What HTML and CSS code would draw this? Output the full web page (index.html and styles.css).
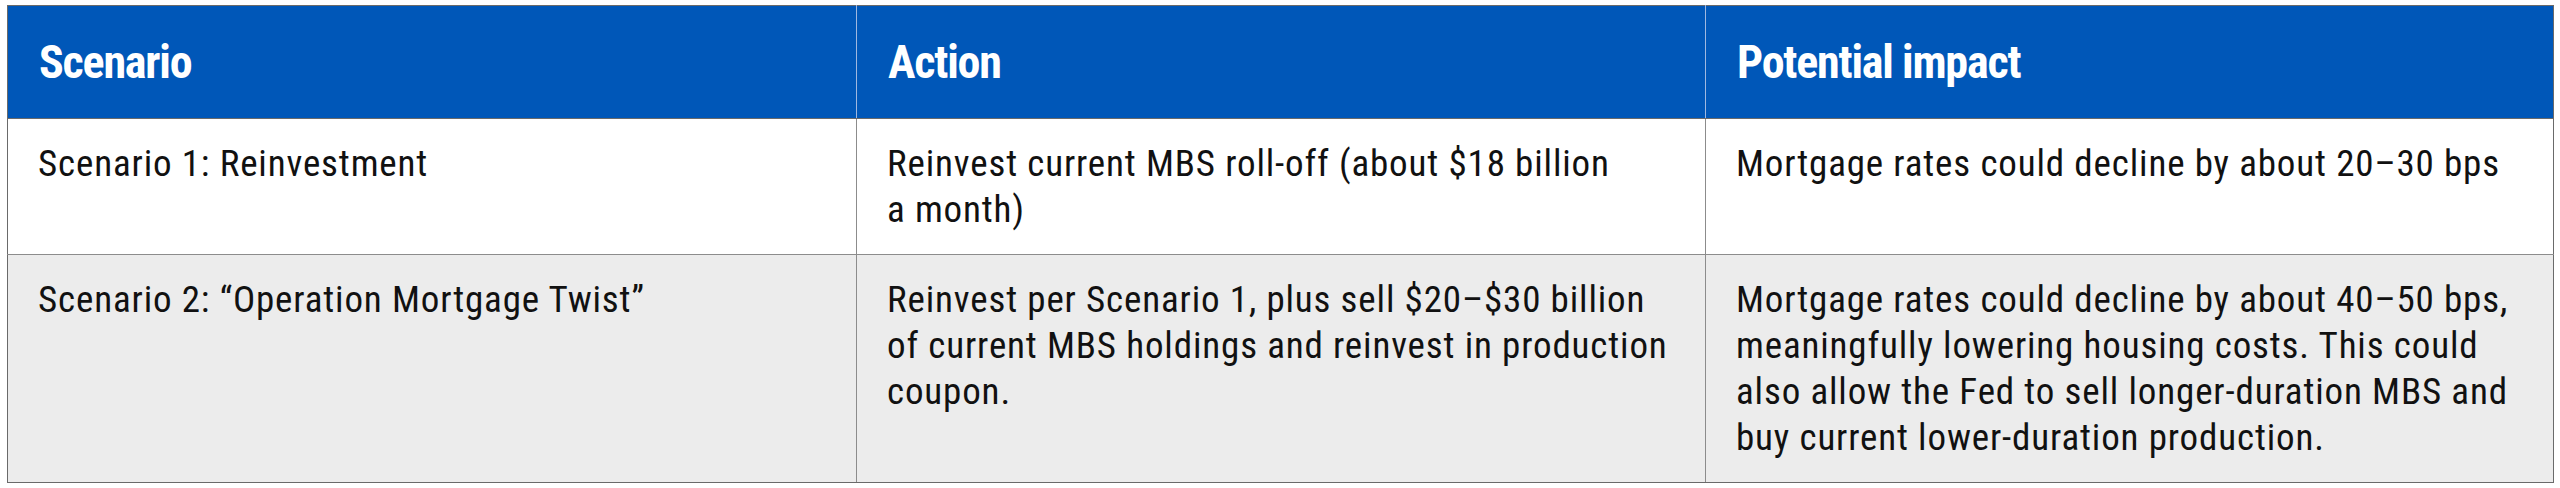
FILE: index.html
```html
<!DOCTYPE html>
<html lang="en">
<head>
<meta charset="utf-8">
<title>Scenarios</title>
<link rel="stylesheet" href="styles.css">
</head>
<body>
<table class="grid">
  <colgroup>
    <col class="c1"><col class="c2"><col class="c3">
  </colgroup>
  <thead>
    <tr class="head">
      <th>Scenario</th>
      <th>Action</th>
      <th>Potential impact</th>
    </tr>
  </thead>
  <tbody>
    <tr class="row">
      <td>Scenario 1: Reinvestment</td>
      <td>Reinvest current MBS roll-off (about $18 billion<br>a month)</td>
      <td>Mortgage rates could decline by about 20–30 bps</td>
    </tr>
    <tr class="row alt">
      <td>Scenario 2: “Operation Mortgage Twist”</td>
      <td>Reinvest per Scenario 1, plus sell $20–$30 billion<br>of current MBS holdings and reinvest in production<br>coupon.</td>
      <td>Mortgage rates could decline by about 40–50 bps,<br>meaningfully lowering housing costs. This could<br>also allow the Fed to sell longer-duration MBS and<br>buy current lower-duration production.</td>
    </tr>
  </tbody>
</table>
</body>
</html>
```

FILE: styles.css
```css
html, body {
  margin: 0;
  padding: 0;
  background: #ffffff;
}

body {
  padding: 5px 0 0 7px;
  font-family: "Roboto Condensed", "Roboto", "Liberation Sans Narrow", sans-serif;
  color: #111111;
}

.grid {
  border-collapse: collapse;
  width: 2546px;
  table-layout: fixed;
  border: 1px solid #6a6a6a;
}

.c1 { width: 849px; }
.c2 { width: 849px; }
.c3 { width: 848px; }

.head th {
  background: #0057b8;
  color: #ffffff;
  font-weight: 700;
  font-size: 46px;
  letter-spacing: -1.2px;
  line-height: 58px;
  text-align: left;
  padding: 27px 30px 27px 31px;
  border-left: 1px solid #9fb8e0;
  border-bottom: 1px solid #6a6a6a;
  vertical-align: top;
}

.head th:first-child {
  border-left: 1px solid #6a6a6a;
}

.row td {
  font-size: 37px;
  letter-spacing: 0.85px;
  line-height: 46px;
  padding: 22px 30px 21px 30px;
  vertical-align: top;
  text-align: left;
  border-left: 1px solid #8c8c8c;
  border-bottom: 1px solid #8c8c8c;
}

.row td:first-child {
  border-left: 1px solid #6a6a6a;
}

.row.alt td {
  background: #ececec;
  border-bottom: 1px solid #6a6a6a;
}
```
